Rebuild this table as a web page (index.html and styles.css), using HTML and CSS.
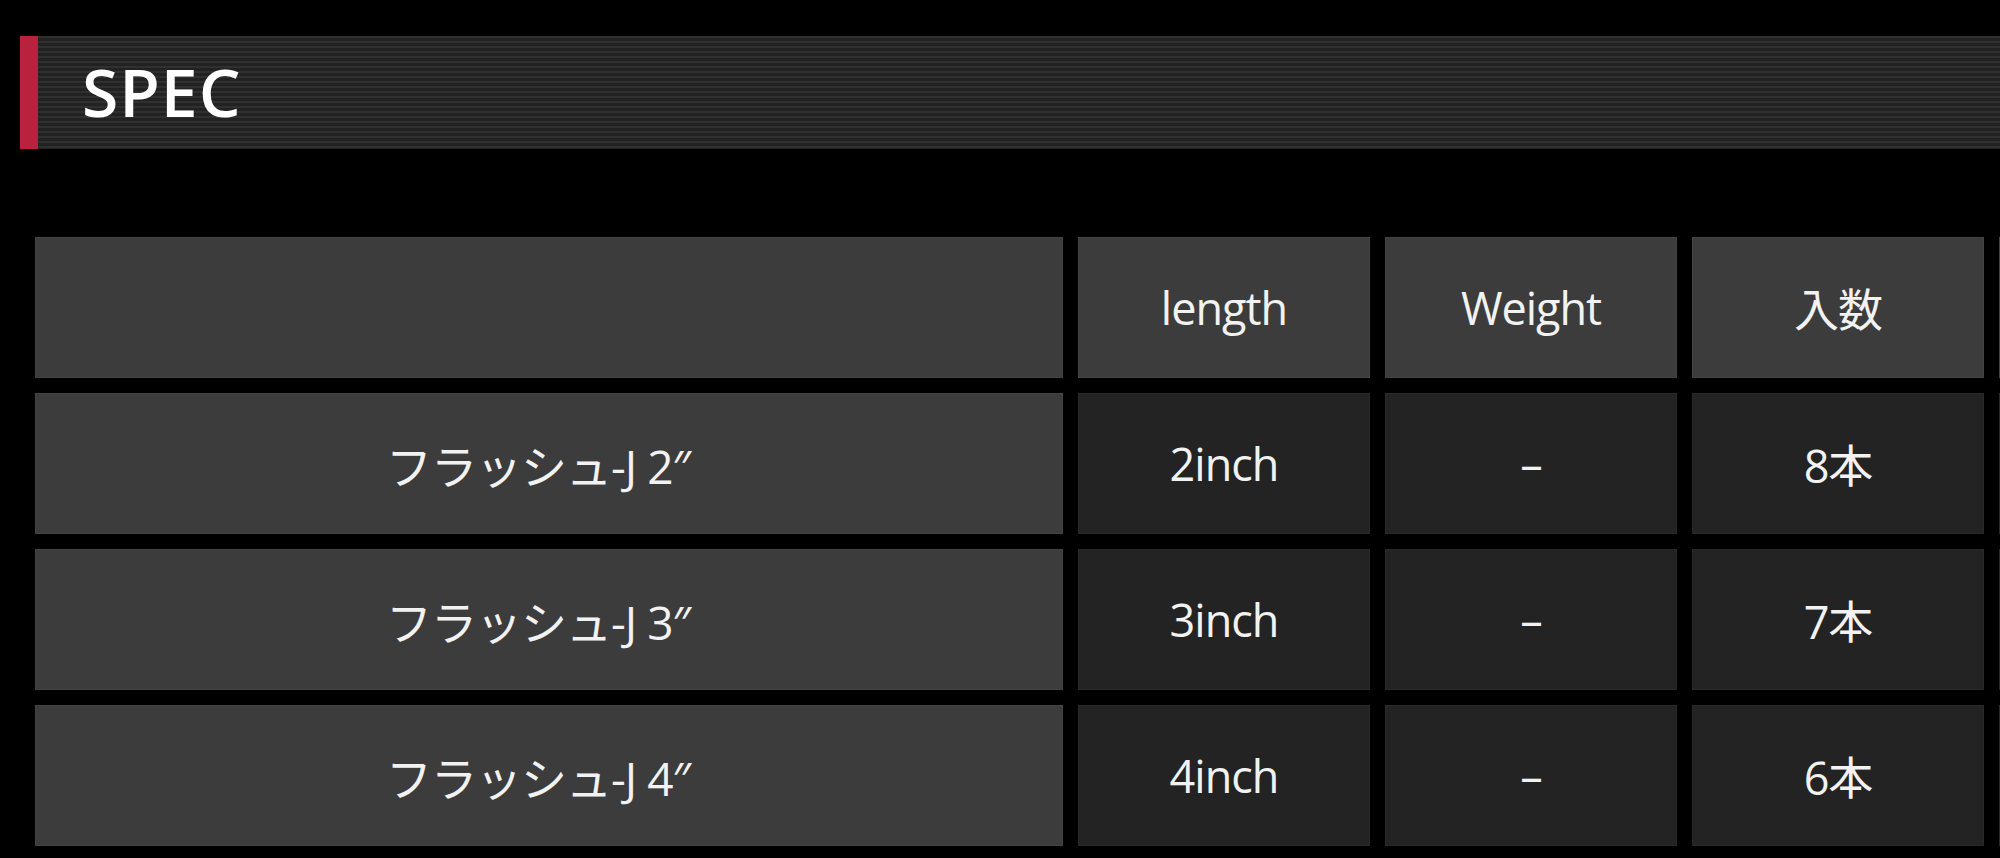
FILE: index.html
```html
<!DOCTYPE html>
<html lang="ja">
<head>
<meta charset="utf-8">
<title>SPEC</title>
<link rel="stylesheet" href="styles.css">
</head>
<body>
<section class="spec">
  <h2 class="spec-heading">SPEC</h2>
  <div class="spec-table-wrap">
    <table class="spec-table">
      <thead>
        <tr>
          <th class="col-name"></th>
          <th class="col-val">length</th>
          <th class="col-val">Weight</th>
          <th class="col-val">入数</th>
          <th class="col-val"></th>
        </tr>
      </thead>
      <tbody>
        <tr>
          <th class="row-name">フラッシュ-J 2″</th>
          <td>2inch</td>
          <td>–</td>
          <td>8本</td>
          <td></td>
        </tr>
        <tr>
          <th class="row-name">フラッシュ-J 3″</th>
          <td>3inch</td>
          <td>–</td>
          <td>7本</td>
          <td></td>
        </tr>
        <tr>
          <th class="row-name">フラッシュ-J 4″</th>
          <td>4inch</td>
          <td>–</td>
          <td>6本</td>
          <td></td>
        </tr>
      </tbody>
    </table>
  </div>
</section>
</body>
</html>
```

FILE: styles.css
```css
html, body {
  margin: 0;
  padding: 0;
  background: #000;
  overflow: hidden;
}

body {
  padding: 36px 0 0 20px;
  font-family: "Open Sans", "Noto Sans CJK JP", sans-serif;
  color: #f2f2f2;
}

.spec-heading {
  margin: 0;
  height: 113px;
  box-sizing: border-box;
  display: flex;
  align-items: center;
  padding: 0 0 4px 44px;
  border-left: 18px solid #b8223f;
  background: repeating-linear-gradient(to bottom, #303030 0, #303030 2px, #222 2px, #222 5px);
  font-size: 66px;
  font-weight: 600;
  letter-spacing: 1px;
  color: #fff;
}

.spec-table-wrap {
  margin-top: 73px;
  overflow: hidden;
}

.spec-table {
  border-collapse: separate;
  border-spacing: 15px;
  margin: 0;
  table-layout: fixed;
  width: 2285px;
}

.spec-table th,
.spec-table td {
  padding: 0;
  height: 141px;
  text-align: center;
  vertical-align: middle;
  font-size: 45px;
  font-weight: 400;
  letter-spacing: -1px;
  color: #f2f2f2;
}

.col-name { width: 1028px; }
.col-val { width: 292px; }

.spec-table thead th,
.spec-table .row-name {
  background: #3c3c3c;
  box-shadow: inset 0 0 0 1px #434343;
}

.spec-table .row-name {
  font-size: 46px;
  padding-right: 22px;
}

.spec-table td {
  background: #232323;
  box-shadow: inset 0 0 0 1px #292929;
}
```
